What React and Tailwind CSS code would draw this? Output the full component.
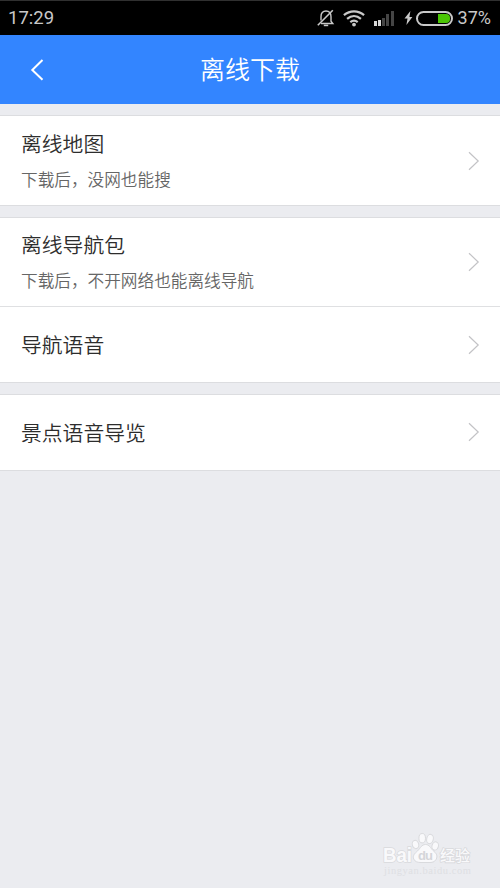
const groups = [
  [{ title: "离线地图", desc: "下载后，没网也能搜", size: "h-[89px]" }],
  [
    { title: "离线导航包", desc: "下载后，不开网络也能离线导航", size: "h-[89px] pb-px" },
    { title: "导航语音", size: "h-[75px]" },
  ],
  [{ title: "景点语音导览", size: "h-[75px] pb-px" }],
];

const StatusBar = () => (
  <div className="flex h-[35px] items-center border-t border-[#303030] bg-black pl-2 pr-[9px] text-[#c9c9c9]">
    <span className="font-[Roboto,sans-serif] text-[18.5px] leading-none">17:29</span>
    <svg className="ml-auto" width="18" height="18" viewBox="0 0 18 18" fill="none" stroke="currentColor" strokeWidth="1.4">
      <path d="M4 11.5V7.8C4 4.2 5.7 2 9 2s5 2.2 5 5.8v4.4l1.8 2.3H4" />
      <path d="M.8 16.2 15.8 1.2" strokeWidth="1.6" />
      <path d="M6.8 16.4h4.4" strokeWidth="1.6" />
    </svg>
    <svg className="ml-2" width="22" height="18" viewBox="0 0 22 18" fill="none" stroke="currentColor" strokeWidth="2.2">
      <path d="M.9 6.2c6-5.2 14.2-5.2 20.2 0" />
      <path d="M4.1 9.8c4.2-3.7 9.6-3.7 13.8 0" />
      <path d="M7.3 13.2c2.3-1.9 5.1-1.9 7.4 0" />
      <circle cx="11" cy="15.6" r="1.9" fill="currentColor" stroke="none" />
    </svg>
    <div className="ml-[9px] flex h-4 w-5 items-end justify-between">
      <i className="h-[5px] w-[3px] bg-[#d8d8d8]" />
      <i className="h-[6px] w-[3px] bg-[#d8d8d8]" />
      <i className="h-[8px] w-[3px] bg-[#454545]" />
      <i className="h-[12px] w-[3px] bg-[#454545]" />
      <i className="h-[15px] w-[3px] bg-[#454545]" />
    </div>
    <svg className="ml-[10px]" width="9" height="16" viewBox="0 0 9 16" fill="currentColor">
      <path d="M6.4 1 .5 8.6h3L2.4 15l6-8h-3z" />
    </svg>
    <div className="ml-[3px] flex h-[15px] w-[37px] items-center justify-end rounded-full border-2 border-[#c9c9c9] pr-px">
      <i className="h-[9px] w-3 rounded-r-[4px] bg-[#4ac504]" />
    </div>
    <span className="ml-[5px] font-[Roboto,sans-serif] text-[18px] leading-none">37%</span>
  </div>
);

const Header = () => (
  <header className="flex h-[69px] items-center bg-[#3385ff] px-[30px]">
    <button className="w-[14px]">
      <svg width="14" height="22" viewBox="0 0 14 22" fill="none" stroke="#fff" strokeWidth="2">
        <path d="M12.5 1 2.3 11l10.2 9.8" />
      </svg>
    </button>
    <h1 className="flex-1 pb-[2px] pr-[14px] text-center text-[25px] font-[350] leading-none text-white">离线下载</h1>
  </header>
);

const Row = ({ title, desc, size }) => (
  <li className={`flex items-center justify-between pl-[21px] pr-5 ${size}`}>
    <div className="flex flex-col gap-[17px] pb-px font-[350]">
      <span className="text-[20.8px] leading-[20px] text-[#2d2d2d]">{title}</span>
      {desc && <span className="text-[16.65px] leading-[18px] text-[#666]">{desc}</span>}
    </div>
    <svg width="12" height="20" viewBox="0 0 12 20" fill="none" stroke="#c3c3c6" strokeWidth="1.2">
      <path d="M1 1.2 10.2 10 1 18.8" />
    </svg>
  </li>
);

const Watermark = () => (
  <div className="absolute bottom-[7px] right-[26px] h-[49px] w-[96px]">
    <svg width="96" height="49" viewBox="0 0 96 49" fill="#f9f9fb" stroke="#d9dadd" strokeWidth="1">
      <ellipse cx="37.5" cy="12.5" rx="3.2" ry="4.2" transform="rotate(-15 37.5 12.5)" />
      <ellipse cx="44.2" cy="6.2" rx="3.3" ry="4.7" />
      <ellipse cx="52" cy="7" rx="3.3" ry="4.7" transform="rotate(12 52 7)" />
      <ellipse cx="57.2" cy="14" rx="3.2" ry="4.2" transform="rotate(15 57.2 14)" />
      <path d="M47.5 12.5c4 0 5 3.5 7.5 6 3 2.5 4.5 4.5 3.7 7.5-1 3.5-4 4.5-6.700 4.500h-9c-3 0-6-.5-7.300-3.500-1.200-3.300.8-5.500 3.800-8C42.500 16 43.500 12.500 47.500 12.500z" />
      <g fontFamily="Liberation Sans, Noto Sans CJK SC, sans-serif" fontWeight="bold" paintOrder="stroke" strokeWidth="1.6">
        <text x="5" y="29.5" fontSize="21" textLength="29" lengthAdjust="spacingAndGlyphs">Bai</text>
        <text x="62" y="28.5" fontSize="15" fontWeight="500" textLength="30">经验</text>
      </g>
      <text x="40" y="28" fontSize="13" fontWeight="bold" fontFamily="Liberation Sans, sans-serif" fill="#d4d5d9" stroke="none" textLength="15">du</text>
      <text x="6" y="42" fontSize="10.5" fontFamily="Liberation Serif, serif" fill="#dedfe3" stroke="none" textLength="87">jingyan.baidu.com</text>
    </svg>
  </div>
);

const App = () => {
  return (
    <div className="relative h-[888px] w-[500px] overflow-hidden bg-[#ebecf0] font-['Noto_Sans_CJK_SC',sans-serif]">
      <StatusBar />
      <Header />
      <main className="flex flex-col gap-[11px] pt-[11px]">
        {groups.map((rows) => (
          <ul key={rows[0].title} className="divide-y divide-[#dfe0e2] border-y border-[#dcdde0] bg-white">
            {rows.map((row) => (
              <Row key={row.title} {...row} />
            ))}
          </ul>
        ))}
      </main>
      <Watermark />
    </div>
  );
};

export default App;
